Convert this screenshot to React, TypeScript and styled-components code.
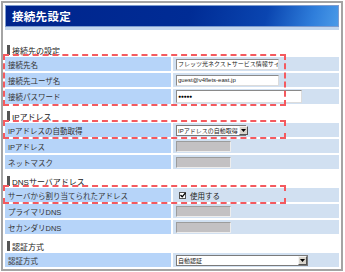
import styled, { createGlobalStyle } from "styled-components";

const Global = createGlobalStyle`
  html, body {
    margin: 0;
    padding: 0;
    background: #fff;
  }
  body {
    font-family: "Liberation Sans", "Noto Sans CJK JP", sans-serif;
    color: #333;
  }
`

type Field =
  | { kind: "text"; value: string; width?: number }
  | { kind: "password"; value: string }
  | { kind: "select"; value: string; width: number }
  | { kind: "disabled" }
  | { kind: "check"; value: string }

type Item = { label: string; field: Field }

type Section = { title: string; groups: { marked: boolean; items: Item[] }[] }

const sections: Section[] = [
  {
    title: "接続先の設定",
    groups: [
      {
        marked: true,
        items: [
          { label: "接続先名", field: { kind: "text", value: "フレッツ光ネクストサービス情報サイ" } },
          { label: "接続先ユーザ名", field: { kind: "text", value: "guest@v4flets-east.jp" } },
          { label: "接続パスワード", field: { kind: "password", value: "●●●●●" } },
        ],
      },
    ],
  },
  {
    title: "IPアドレス",
    groups: [
      {
        marked: true,
        items: [{ label: "IPアドレスの自動取得", field: { kind: "select", value: "IPアドレスの自動取得", width: 70 } }],
      },
      {
        marked: false,
        items: [
          { label: "IPアドレス", field: { kind: "disabled" } },
          { label: "ネットマスク", field: { kind: "disabled" } },
        ],
      },
    ],
  },
  {
    title: "DNSサーバアドレス",
    groups: [
      {
        marked: true,
        items: [{ label: "サーバから割り当てられたアドレス", field: { kind: "check", value: "使用する" } }],
      },
      {
        marked: false,
        items: [
          { label: "プライマリDNS", field: { kind: "disabled" } },
          { label: "セカンダリDNS", field: { kind: "disabled" } },
        ],
      },
    ],
  },
  {
    title: "認証方式",
    groups: [
      {
        marked: false,
        items: [{ label: "認証方式", field: { kind: "select", value: "自動認証", width: 132 } }],
      },
    ],
  },
]

function renderField(f: Field) {
  switch (f.kind) {
    case "text":
      return <TextBox>{f.value}</TextBox>
    case "password":
      return <PasswordBox>{f.value}</PasswordBox>
    case "select":
      return (
        <SelectBox $width={f.width}>
          <span>{f.value}</span>
          <Arrow>
            <svg width="5" height="3" viewBox="0 0 5 3">
              <path d="M0 0h5L2.5 3z" fill="#000" />
            </svg>
          </Arrow>
        </SelectBox>
      )
    case "disabled":
      return <DisabledBox />
    case "check":
      return (
        <CheckLabel>
          <CheckBox>
            <svg width="6" height="6" viewBox="0 0 6 6">
              <path d="M0.5 3l1.7 1.8L5.5 0.8" stroke="#000" strokeWidth="1.3" fill="none" />
            </svg>
          </CheckBox>
          {f.value}
        </CheckLabel>
      )
  }
}

export default function App() {
  return (
    <>
      <Global />
      <Frame>
        <Header>
          <Title>接続先設定</Title>
        </Header>
        <Strip />
        {sections.map((s, i) => (
          <SectionBox key={s.title} $first={i === 0}>
            <Heading>{s.title}</Heading>
            <Rows>
              {s.groups.map((g, gi) => (
                <Group key={gi} $marked={g.marked}>
                  {g.items.map((it) => (
                    <Row key={it.label} $tall={it.field.kind === "password"}>
                      <Label>{it.label}</Label>
                      <Value>{renderField(it.field)}</Value>
                    </Row>
                  ))}
                </Group>
              ))}
            </Rows>
          </SectionBox>
        ))}
      </Frame>
    </>
  )
}

const Frame = styled.div`
  box-sizing: border-box;
  margin: 1px 0 0 1px;
  width: 342px;
  height: 270px;
  border: 2px solid #a4a4a4;
  padding: 2px 2px 0;
  overflow: hidden;
`

const Header = styled.div`
  box-sizing: border-box;
  height: 22px;
  border: 1px solid #7d9ccf;
  background: linear-gradient(105deg, #00248c 0%, #002c95 55%, #0a45b0 78%, #2f7edb 92%, #4a9ae8 100%);
  display: flex;
  align-items: center;
  padding-left: 6px;
`

const Title = styled.h1`
  margin: 0;
  font-size: 11.5px;
  font-weight: bold;
  color: #fff;
  letter-spacing: 0.3px;
`

const Strip = styled.div`
  height: 3px;
  background: #c3d7ee;
`

const SectionBox = styled.section<{ $first: boolean }>`
  margin-top: ${(p) => (p.$first ? "13px" : "5px")};
`

const Heading = styled.h2`
  margin: 0;
  height: 14px;
  display: flex;
  align-items: center;
  gap: 2px;
  font-size: 8px;
  font-weight: normal;
  color: #222;
  padding-left: 2px;

  &::before {
    content: "";
    width: 3px;
    height: 10px;
    background: #555;
  }
`

const Rows = styled.div`
  display: flex;
  flex-direction: column;
  gap: 2px;
`

const Group = styled.div<{ $marked: boolean }>`
  position: relative;
  display: flex;
  flex-direction: column;
  gap: 2px;

  &::after {
    content: "";
    display: ${(p) => (p.$marked ? "block" : "none")};
    position: absolute;
    left: -2px;
    top: -3px;
    bottom: -2px;
    width: 283px;
    box-sizing: border-box;
    border: 2px dashed #f45a5f;
    pointer-events: none;
  }
`

const Row = styled.div<{ $tall: boolean }>`
  display: grid;
  grid-template-columns: 166px 1fr;
  column-gap: 2px;
  height: ${(p) => (p.$tall ? "15px" : "14px")};
`

const Label = styled.div`
  background: #b6d4f9;
  font-size: 7.5px;
  color: #333;
  padding-left: 3px;
  display: flex;
  align-items: center;
  white-space: nowrap;
`

const Value = styled.div`
  background: #d1e0f1;
  padding-left: 3px;
  display: flex;
  align-items: center;
`

const TextBox = styled.div`
  box-sizing: border-box;
  width: 103px;
  height: 11px;
  background: #fff;
  border: 1px solid;
  border-color: #8a8a8a #dcdcdc #dcdcdc #8a8a8a;
  font-size: 6px;
  line-height: 9px;
  padding-left: 1px;
  color: #222;
  white-space: nowrap;
  overflow: hidden;
`

const PasswordBox = styled(TextBox)`
  width: 126px;
  height: 13px;
  font-size: 5px;
  line-height: 11px;
  letter-spacing: -0.3px;
  color: #000;
`

const SelectBox = styled.div<{ $width: number }>`
  box-sizing: border-box;
  width: ${(p) => p.$width}px;
  height: 11px;
  background: #fff;
  border: 1px solid #7a7a7a;
  display: flex;
  align-items: center;
  justify-content: space-between;
  gap: 1px;
  font-size: 6px;
  color: #222;
  padding-left: 1px;
  white-space: nowrap;
`

const Arrow = styled.div`
  box-sizing: border-box;
  width: 9px;
  height: 9px;
  flex-shrink: 0;
  background: #d8d4cc;
  border: 1px solid;
  border-color: #f4f4f4 #555 #555 #f4f4f4;
  display: flex;
  align-items: center;
  justify-content: center;
`

const DisabledBox = styled.div`
  box-sizing: border-box;
  width: 55px;
  height: 11px;
  background: #c3c1c3;
  border: 1px solid;
  border-color: #9c9c9c #ededed #ededed #9c9c9c;
`

const CheckLabel = styled.div`
  display: flex;
  align-items: center;
  gap: 4px;
  padding-left: 3px;
  font-size: 7.5px;
  color: #222;
`

const CheckBox = styled.div`
  box-sizing: border-box;
  width: 7px;
  height: 7px;
  background: #fff;
  border: 1px solid #555;
  display: flex;
  align-items: center;
  justify-content: center;

  svg {
    flex-shrink: 0;
  }
`
